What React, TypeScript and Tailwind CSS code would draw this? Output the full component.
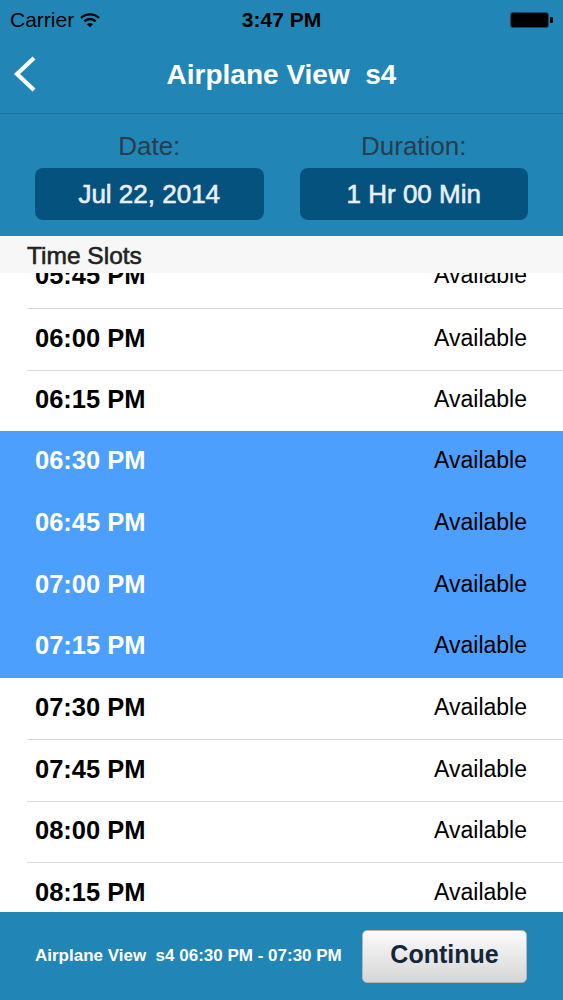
import React from 'react';

interface Slot {
  time: string;
  selected?: boolean;
  h: number;
  divider?: boolean;
}

const slots: Slot[] = [
  { time: '05:45 PM', h: 62 },
  { time: '06:00 PM', h: 62, divider: true },
  { time: '06:15 PM', h: 61, divider: true },
  { time: '06:30 PM', h: 62, selected: true },
  { time: '06:45 PM', h: 62, selected: true },
  { time: '07:00 PM', h: 61, selected: true },
  { time: '07:15 PM', h: 62, selected: true },
  { time: '07:30 PM', h: 61 },
  { time: '07:45 PM', h: 62, divider: true },
  { time: '08:00 PM', h: 61, divider: true },
  { time: '08:15 PM', h: 62, divider: true },
];

function StatusBar() {
  return (
    <div className="flex h-[40px] items-center justify-between pl-[10px] pr-[10px] text-[21px] text-black">
      <div className="flex w-[180px] items-center gap-[6px]">
        <span>Carrier</span>
        <svg width="20" height="16" viewBox="0 0 20 16" fill="none">
          <path d="M1 6 A13 13 0 0 1 19 6" stroke="black" strokeWidth="2.4" />
          <path d="M4.4 9.3 A8 8 0 0 1 15.6 9.3" stroke="black" strokeWidth="2.4" />
          <path d="M10 15.2 L7 12.2 A4.2 4.2 0 0 1 13 12.2 Z" fill="black" />
        </svg>
      </div>
      <span className="font-bold">3:47 PM</span>
      <div className="flex w-[180px] items-center justify-end">
        <div className="h-[16px] w-[39px] rounded-[3px] border border-[#124a68] bg-black" />
        <div className="ml-[1px] h-[6px] w-[3px] rounded-r-[1px] bg-black" />
      </div>
    </div>
  );
}

function NavBar() {
  return (
    <div className="relative flex h-[74px] items-center justify-center border-b border-[#1a6e97] pb-[3px]">
      <svg
        className="absolute left-[12px] top-[16px]"
        width="26"
        height="36"
        viewBox="0 0 26 36"
        fill="none"
      >
        <path d="M22 2 L5 18 L22 34" stroke="white" strokeWidth="4.2" />
      </svg>
      <span className="whitespace-pre text-[28px] font-bold text-white">Airplane View  s4</span>
    </div>
  );
}

function Picker({ label, value }: { label: string; value: string }) {
  return (
    <div className="flex flex-col items-center">
      <span className="text-[26px] leading-[30px] text-[#263d4d]">{label}</span>
      <div className="mt-[7px] flex h-[52px] w-full items-center justify-center rounded-[8px] bg-[#05527f] text-[26px] text-[#e8f0f5] [-webkit-text-stroke:0.6px_#e8f0f5]">
        {value}
      </div>
    </div>
  );
}

export default function App() {
  return (
    <div
      className="flex h-[1000px] w-[563px] flex-col overflow-hidden bg-white"
      style={{ fontFamily: '"Liberation Sans", Arial, sans-serif' }}
    >
      <div className="bg-[#2186b6]">
        <StatusBar />
        <NavBar />
        {/* Date / duration pickers */}
        <div className="grid h-[122px] grid-cols-2 gap-[36px] px-[35px] pt-[17px]">
          <Picker label="Date:" value="Jul 22, 2014" />
          <Picker label="Duration:" value="1 Hr 00 Min" />
        </div>
      </div>

      {/* Slot list */}
      <div className="relative flex-1 overflow-hidden">
        <div className="absolute inset-x-0 top-0 z-10 flex h-[37px] items-center bg-[#f7f7f7] pl-[27px] pt-[4px] text-[24.5px] text-[#222] [-webkit-text-stroke:0.6px_#222]">
          Time Slots
        </div>
        <div className="pt-[10px]">
          {slots.map((s) => (
            <div
              key={s.time}
              className={s.selected ? 'bg-[#4c9ffd]' : 'bg-white'}
              style={{ height: s.h }}
            >
              <div
                className={`ml-[27px] flex h-full items-center justify-between pb-[3px] pl-[8px] pr-[36px] ${
                  s.divider ? 'border-t border-[#d9d9d9]' : ''
                }`}
              >
                <span className={`text-[25.5px] font-bold ${s.selected ? 'text-white' : 'text-black'}`}>
                  {s.time}
                </span>
                <span className="text-[23px] text-black">Available</span>
              </div>
            </div>
          ))}
        </div>
      </div>

      {/* Footer */}
      <div className="flex h-[88px] items-center justify-between bg-[#2186b6] pl-[35px] pr-[36px]">
        <span className="whitespace-pre text-[17px] font-bold text-white">
          Airplane View  s4 06:30 PM - 07:30 PM
        </span>
        <button className="h-[53px] w-[165px] rounded-[5px] border border-[#b5b5b5] bg-gradient-to-b from-[#fbfbfb] to-[#d6d6d6] pb-[2px] text-[25px] font-bold text-[#15253a]">
          Continue
        </button>
      </div>
    </div>
  );
}
